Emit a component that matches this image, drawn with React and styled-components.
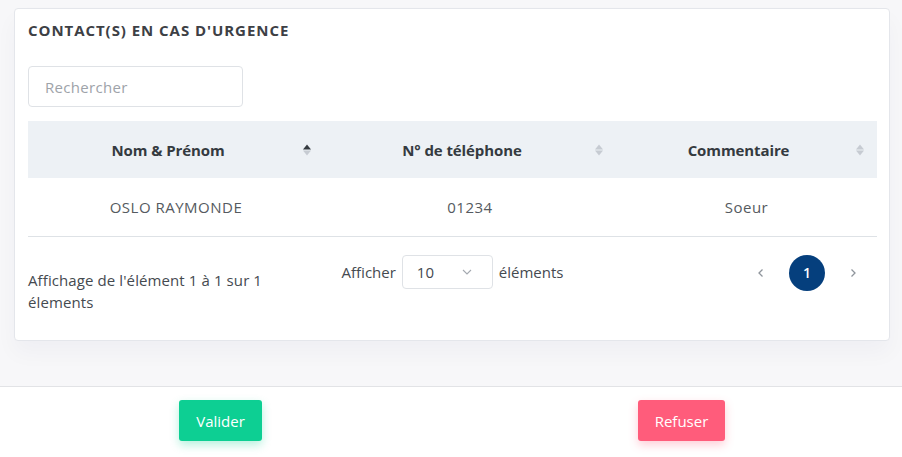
import React from "react";
import styled, { createGlobalStyle } from "styled-components";

const Global = createGlobalStyle`
  html, body { margin: 0; padding: 0; background: #ffffff; }
  body { font-family: "Open Sans", "Noto Sans", Arial, sans-serif; color: #495057; }
  * { box-sizing: border-box; }
`;

const Page = styled.div`
  width: 902px;
  height: 457px;
  overflow: hidden;
  display: flex;
  flex-direction: column;
`;

const TopArea = styled.div`
  background: #f7f7f9;
  padding: 8px 12px 45px 14px;
`;

const Card = styled.section`
  background: #fff;
  border: 1px solid #e4e6eb;
  border-radius: 4px;
  height: 333px;
  padding: 11px 12px 0 13px;
  box-shadow: 0 12px 22px rgba(30, 40, 80, 0.035);
`;

const Title = styled.h2`
  margin: 0;
  font-size: 15px;
  font-weight: 700;
  line-height: 20px;
  color: #3d4045;
  letter-spacing: 0.95px;
`;

const Search = styled.input`
  display: block;
  margin-top: 26px;
  width: 215px;
  height: 41px;
  border: 1px solid #dfe2e6;
  border-radius: 4px;
  padding: 0 16px;
  font-family: inherit;
  font-size: 15px;
  letter-spacing: 0.3px;
  color: #495057;
  outline: none;
  &::placeholder { color: #9ea3a9; }
`;

const Table = styled.table`
  margin-top: 14px;
  width: 849px;
  border-collapse: collapse;
  table-layout: fixed;
`;

const Th = styled.th`
  position: relative;
  background: #edf1f5;
  height: 57px;
  padding: 0 30px 0 14px;
  font-size: 15px;
  font-weight: 700;
  letter-spacing: -0.1px;
  color: #343a40;
  text-align: center;
`;

const Td = styled.td`
  height: 58px;
  padding: 0 14px;
  font-size: 15px;
  letter-spacing: 0.5px;
  color: #555a60;
  text-align: center;
  border-bottom: 1px solid #dee2e6;
`;

const SortWrap = styled.span`
  position: absolute;
  right: 13px;
  top: 50%;
  transform: translateY(-50%);
  display: flex;
  flex-direction: column;
  gap: 1px;
`;

const Tri = styled.span`
  width: 0;
  height: 0;
  border-left: 4.5px solid transparent;
  border-right: 4.5px solid transparent;
  ${(p) => (p.$up ? `border-bottom: 5px solid ${p.$c};` : `border-top: 5px solid ${p.$c};`)}
`;

function Sort({ active }) {
  return (
    <SortWrap>
      <Tri $up $c={active ? "#343a40" : "#c6cbd2"} />
      <Tri $c="#c6cbd2" />
    </SortWrap>
  );
}

const Footer = styled.div`
  display: grid;
  grid-template-columns: 283px 283px 283px;
  align-items: start;
  width: 849px;
`;

const Info = styled.div`
  padding-top: 32px;
  font-size: 15px;
  line-height: 22px;
  letter-spacing: 0.1px;
  color: #454a50;
`;

const Length = styled.div`
  padding-top: 18px;
  display: flex;
  justify-content: center;
  align-items: center;
  gap: 6px;
  font-size: 15px;
  color: #454a50;
`;

const Select = styled.div`
  width: 91px;
  height: 34px;
  border: 1px solid #dfe2e6;
  border-radius: 4px;
  display: flex;
  align-items: center;
  justify-content: space-between;
  padding: 0 20px 0 14px;
  color: #454a50;
`;

const Pager = styled.div`
  padding-top: 18px;
  padding-right: 6px;
  display: flex;
  justify-content: flex-end;
  align-items: center;
  gap: 10px;
`;

const PageBtn = styled.span`
  width: 36px;
  height: 36px;
  border-radius: 50%;
  display: flex;
  align-items: center;
  justify-content: center;
  font-size: 14px;
  font-weight: ${(p) => (p.$active ? 600 : 400)};
  background: ${(p) => (p.$active ? "#053f7d" : "transparent")};
  color: ${(p) => (p.$active ? "#fff" : "#8f959c")};
`;

const Actions = styled.div`
  flex: 1;
  background: #fff;
  border-top: 1px solid #e2e3e6;
  display: grid;
  grid-template-columns: 1fr 1fr;
  align-items: start;
  padding-top: 13px;
`;

const Cell = styled.div`
  display: flex;
  justify-content: center;
`;

const Button = styled.button`
  height: 41px;
  padding: 0 ${(p) => p.$pad}px;
  border: none;
  border-radius: 3px;
  font-family: inherit;
  font-size: 15px;
  color: #fff;
  background: ${(p) => p.$bg};
  box-shadow: 0 4px 10px ${(p) => p.$shadow};
  margin: ${(p) => p.$margin};
  cursor: pointer;
`;

const Chevron = ({ dir }) => (
  <svg width="8" height="10" viewBox="0 0 8 10" fill="none" stroke="currentColor" strokeWidth="1.3">
    {dir === "left" ? <path d="M5.5 1.5 L2 5 L5.5 8.5" /> : <path d="M2.5 1.5 L6 5 L2.5 8.5" />}
  </svg>
);

const Down = () => (
  <svg width="10" height="6" viewBox="0 0 10 6" fill="none" stroke="#a4a9b0" strokeWidth="1.1">
    <path d="M1 1 L5 5 L9 1" />
  </svg>
);

export default function App() {
  return (
    <Page>
      <Global />
      <TopArea>
        <Card>
          <Title>CONTACT(S) EN CAS D'URGENCE</Title>
          <Search placeholder="Rechercher" />
          <Table>
            <colgroup>
              <col style={{ width: 296 }} />
              <col style={{ width: 292 }} />
              <col style={{ width: 261 }} />
            </colgroup>
            <thead>
              <tr>
                <Th>Nom &amp; Prénom<Sort active /></Th>
                <Th>N° de téléphone<Sort /></Th>
                <Th>Commentaire<Sort /></Th>
              </tr>
            </thead>
            <tbody>
              <tr>
                <Td>OSLO RAYMONDE</Td>
                <Td>01234</Td>
                <Td>Soeur</Td>
              </tr>
            </tbody>
          </Table>
          <Footer>
            <Info>
              Affichage de l'élément 1 à 1 sur 1
              <br />
              élements
            </Info>
            <Length>
              Afficher
              <Select>
                <span>10</span>
                <Down />
              </Select>
              éléments
            </Length>
            <Pager>
              <PageBtn><Chevron dir="left" /></PageBtn>
              <PageBtn $active>1</PageBtn>
              <PageBtn><Chevron dir="right" /></PageBtn>
            </Pager>
          </Footer>
        </Card>
      </TopArea>
      <Actions>
        <Cell>
          <Button $pad={17} $bg="#0dcf93" $shadow="rgba(13,207,147,0.3)" $margin="0 10px 0 0">Valider</Button>
        </Cell>
        <Cell>
          <Button $pad={17} $bg="#ff5c7b" $shadow="rgba(255,92,123,0.3)" $margin="0 0 0 10px">Refuser</Button>
        </Cell>
      </Actions>
    </Page>
  );
}
